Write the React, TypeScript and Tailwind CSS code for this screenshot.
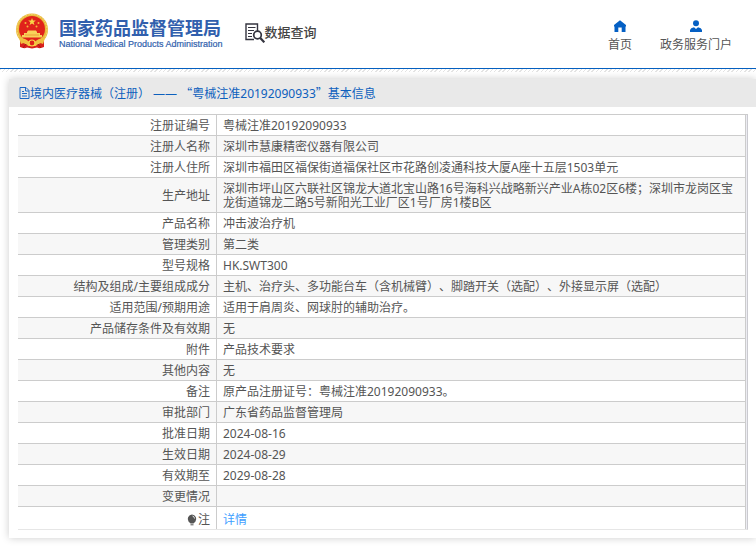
import React from "react";

type Row = { label: string; value: string };

const rows: Row[] = [
  { label: "注册证编号", value: "粤械注准20192090933" },
  { label: "注册人名称", value: "深圳市慧康精密仪器有限公司" },
  { label: "注册人住所", value: "深圳市福田区福保街道福保社区市花路创凌通科技大厦A座十五层1503单元" },
  {
    label: "生产地址",
    value:
      "深圳市坪山区六联社区锦龙大道北宝山路16号海科兴战略新兴产业A栋02区6楼；深圳市龙岗区宝龙街道锦龙二路5号新阳光工业厂区1号厂房1楼B区",
  },
  { label: "产品名称", value: "冲击波治疗机" },
  { label: "管理类别", value: "第二类" },
  { label: "型号规格", value: "HK.SWT300" },
  {
    label: "结构及组成/主要组成成分",
    value: "主机、治疗头、多功能台车（含机械臂）、脚踏开关（选配）、外接显示屏（选配）",
  },
  { label: "适用范围/预期用途", value: "适用于肩周炎、网球肘的辅助治疗。" },
  { label: "产品储存条件及有效期", value: "无" },
  { label: "附件", value: "产品技术要求" },
  { label: "其他内容", value: "无" },
  { label: "备注", value: "原产品注册证号：粤械注准20192090933。" },
  { label: "审批部门", value: "广东省药品监督管理局" },
  { label: "批准日期", value: "2024-08-16" },
  { label: "生效日期", value: "2024-08-29" },
  { label: "有效期至", value: "2029-08-28" },
  { label: "变更情况", value: "" },
];

function Emblem() {
  return (
    <svg viewBox="0 0 34 36" className="h-9 w-[34px] shrink-0" aria-hidden="true">
      <path d="M5 24 L5 34 Q9 36 12 34.500 L17 35.500 L22 34.500 Q25 36 29 34 L29 24Z" fill="#d8201c" />
      <circle cx="17" cy="16.500" r="16" fill="#e9b93c" />
      <circle cx="17" cy="16.500" r="15" fill="none" stroke="#f6d873" strokeWidth="1" strokeDasharray="2 1" />
      <circle cx="17" cy="16" r="13" fill="#e0221b" />
      <path d="M17 5l1 2.600h2.800l-2.200 1.700.8 2.700-2.400-1.600-2.400 1.600.8-2.700-2.200-1.700H16z" fill="#f8d548" />
      <g fill="#f3b83a">
        <circle cx="10.500" cy="10" r="1" />
        <circle cx="23.500" cy="10" r="1" />
        <circle cx="12.500" cy="13.500" r="1" />
        <circle cx="21.500" cy="13.500" r="1" />
      </g>
      <path d="M12 19 L13 17.500 H21 L22 19 V20 H25 V22 H27 V24.500 H7 V22 H9 V20 H12Z" fill="#f8d25a" />
      <path d="M10 22H24" stroke="#e88b2c" strokeWidth="0.700" />
      <path d="M4 25 Q11 25 14 29 H20 Q23 25 30 25 L28 31 Q23 28 21 33 H13 Q11 28 6 31Z" fill="#f0c040" />
      <circle cx="17" cy="30" r="3" fill="#e0221b" stroke="#f8d548" strokeWidth="1.200" />
      <path d="M11 31 L8 35 M23 31 L26 35" stroke="#a91713" strokeWidth="1" />
    </svg>
  );
}

function SearchDoc() {
  return (
    <svg viewBox="0 0 20 20" className="size-5 shrink-0" fill="none" stroke="#34343f" aria-hidden="true">
      <path d="M9 16.500H1V1H12.500V8" strokeWidth="1.400" />
      <path d="M3 4.500H10.500M3 7.500H9M3 10.500H7M3 13.500H7" strokeWidth="1" />
      <circle cx="12.500" cy="12" r="3.800" strokeWidth="1.700" />
      <path d="M15.300 15L19.300 19.300" strokeWidth="2.200" />
    </svg>
  );
}

function HomeIcon() {
  return (
    <svg viewBox="0 0 12 12" className="size-3" fill="#0560c4" aria-hidden="true">
      <path d="M6 0.300 L12 5 V6.500 H11.500 V12 H7.700 V7.500 H4.300 V12 H0.500 V6.500 H0 V5Z" />
    </svg>
  );
}

function UserIcon() {
  return (
    <svg viewBox="0 0 12 12" className="size-3" fill="#0560c4" aria-hidden="true">
      <circle cx="6" cy="3.200" r="3" />
      <path d="M0 12 V10 Q0.500 8 4 7.200 L6 9 L8 7.200 Q11.500 8 12 10 V12Z" />
    </svg>
  );
}

function DocIcon() {
  return (
    <svg viewBox="0 0 11 12" className="h-3 w-[11px] shrink-0" fill="none" stroke="#1c68c4" aria-hidden="true">
      <path d="M1 0.500H7L10 3.500V11.500H1Z M6.500 0.500V4H10 M3 4.500H5 M3 6.500H8 M3 9H8" />
    </svg>
  );
}

function BulbIcon() {
  return (
    <svg viewBox="0 0 10 12" className="h-3 w-2.5" aria-hidden="true">
      <path d="M5 0.500A4.500 4.500 0 0 1 8.500 7.500L6.500 9.500H3.500L1.500 7.500A4.500 4.500 0 0 1 5 0.500Z" fill="#555" />
      <path d="M3.500 10.800H6.500" stroke="#555" strokeWidth="1" />
      <path d="M5.500 2Q7.500 2.500 7.500 4.500" stroke="#ddd" fill="none" />
    </svg>
  );
}

export default function App() {
  return (
    <div
      lang="zh-CN"
      className="bg-white pb-4 font-['Noto_Sans','Noto_Sans_CJK_SC',sans-serif] text-xs text-[#555] [text-spacing-trim:space-all]"
    >
      <header className="flex h-[69px] items-start justify-between border-b border-[#0560c0] pr-6 pl-[15px]">
        <div className="flex pt-[13px]">
          <Emblem />
          <div className="pt-1 pl-2.5 text-[#315fad]">
            <h1 className="font-['Noto_Sans_CJK_SC',sans-serif] text-lg leading-5 font-bold">国家药品监督管理局</h1>
            <p className="font-['Liberation_Sans',sans-serif] text-[9px] leading-[14px] [-webkit-text-stroke:0.2px]">
              National Medical Products Administration
            </p>
          </div>
          <div className="flex items-start pt-2.5 pl-[22px]">
            <SearchDoc />
            <span className="text-[13px] leading-[18px] font-medium text-[#444]">数据查询</span>
          </div>
        </div>
        <nav className="flex gap-7 pt-5">
          <a href="#home" className="flex flex-col items-center gap-[5px] leading-4">
            <HomeIcon />
            首页
          </a>
          <a href="#services" className="flex flex-col items-center gap-[5px] leading-4">
            <UserIcon />
            政务服务门户
          </a>
        </nav>
      </header>
      <div className="h-[3px] bg-[repeating-linear-gradient(135deg,#e4e4e4_0_1px,#ffffff_1px_3px)]" />

      <main className="mt-[7px] ml-[9px] bg-white pb-2 shadow-[0_0_8px_rgba(0,0,0,0.2)]">
        <h2 className="flex h-7 items-center bg-[#e9e9e9] pl-2.5 leading-4 text-[#0d60bd]">
          <DocIcon />
          <span>
            境内医疗器械（注册） ——{" "}
            <span className="font-['Noto_Sans_CJK_SC',sans-serif]">“</span>粤械注准20192090933
            <span className="font-['Noto_Sans_CJK_SC',sans-serif]">”</span>基本信息
          </span>
        </h2>
        <div className="mt-[7px] mr-2 ml-[9px] border-t border-r border-b border-t-[#ccc] border-r-[#cacad0] border-b-[#e6e6e6] bg-[#ececf2] pr-px">
          <table className="w-full table-fixed border-separate border-spacing-0 leading-[14px]">
            <colgroup>
              <col className="w-[199px]" />
              <col />
            </colgroup>
            <tbody>
              {rows.map((row) => (
                <tr key={row.label} className="bg-white even:bg-[#f7f7f7]">
                  <th
                    scope="row"
                    className="h-[21px] border-r border-b border-[#ccc] px-1.5 pt-1 pb-0.5 text-right font-normal"
                  >
                    {row.label}
                  </th>
                  <td className="border-r border-b border-[#ccc] px-1.5 pt-1 pb-0.5">{row.value}</td>
                </tr>
              ))}
              <tr className="bg-white">
                <th scope="row" className="h-[22px] border-r border-[#ccc] px-1.5 pt-1.5 pb-0.5 font-normal">
                  <span className="flex items-center justify-end gap-px">
                    <BulbIcon />注
                  </span>
                </th>
                <td className="border-r border-[#ccc] px-1.5 pt-1.5 pb-0.5">
                  <a href="#detail" className="text-[#409eff]">
                    详情
                  </a>
                </td>
              </tr>
            </tbody>
          </table>
        </div>
      </main>
    </div>
  );
}
